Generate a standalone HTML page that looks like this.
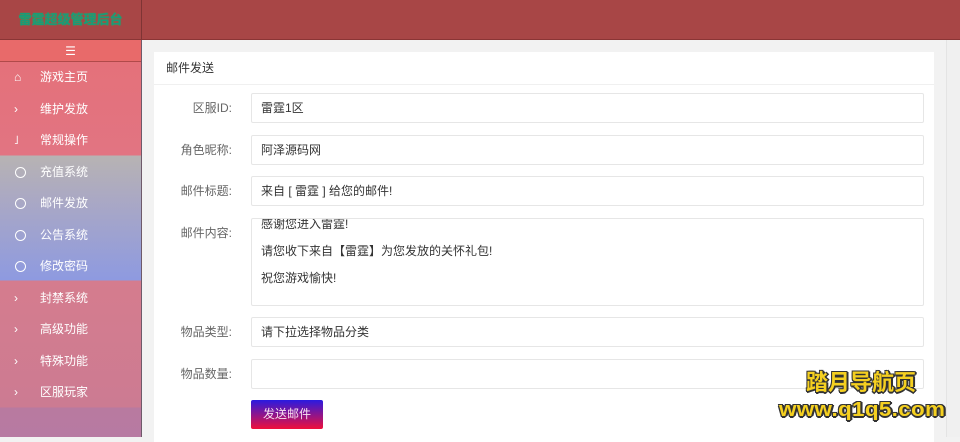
<!DOCTYPE html>
<html><head><meta charset="utf-8"><style>
*{margin:0;padding:0;box-sizing:border-box}
body{width:960px;height:437px;overflow:hidden;font-family:"Liberation Sans","Noto Sans CJK SC",sans-serif;font-size:12px;background:#f2f2f2;position:relative}
.hdr{position:absolute;left:0;top:0;width:960px;height:40px;background:#a84646;border-bottom:1px solid #8a3535}
.logo{position:absolute;left:0;top:0;width:142px;height:40px;border-right:1px solid #7e3434;color:#1a9a78;font-weight:bold;font-size:13px;line-height:40px;text-align:center;text-shadow:0 0 1px #0c6;}
.side{position:absolute;left:0;top:40px;width:142px;height:397px;border-right:1px solid #6e5a6a;
background:linear-gradient(#e86a6a 0,#e86a6a 21px,#e4717a 22px,#e27482 115px,#b7b3b3 116px,#aaa8c4 160px,#8e9ae0 240px,#d57c8e 241px,#cc7b92 367px,#b87aa0 368px,#b77aa2 397px)}
.tog{height:22px;border-bottom:1px solid #b04a4a;color:#fff;text-align:center;line-height:22px;font-size:12px}
.it{height:31.5px;line-height:31.5px;color:#fff;font-size:12px;position:relative;padding-left:40px}
.it i{position:absolute;left:14px;top:0;font-style:normal;font-size:12px}
.circ{position:absolute;left:15px;top:10px;width:11px;height:11px;border:1.5px solid #fff;border-radius:50%}
.card{position:absolute;left:154px;top:52px;width:780px;height:390px;background:#fff}
.ct{height:33px;border-bottom:1px solid #f0f0f0;line-height:33px;padding-left:12px;color:#333}
.lb{position:absolute;left:0;width:78px;text-align:right;color:#666}
.in{position:absolute;left:97px;width:673px;height:30px;border:1px solid #e6e6e6;border-radius:2px;padding-left:9px;line-height:28px;color:#333}
.btn{position:absolute;left:97px;top:348px;width:72px;height:29px;background:linear-gradient(#2a1ae0,#f0103a);color:#f8e0f0;text-align:center;line-height:29px;border-radius:2px}
.sb{position:absolute;left:946px;top:40px;width:14px;height:397px;background:#f0f0f0;border-left:1px solid #e4e4e4}
.wm{position:absolute;font-weight:bold;color:#f5d020;white-space:nowrap;text-shadow:-1px -1px 0 #333,1px -1px 0 #333,-1px 1px 0 #333,1px 1px 0 #333,0 2px 0 #333,2px 0 0 #333}
</style></head><body>
<div class="hdr"></div>
<div class="logo">雷霆超级管理后台</div>
<div class="side">
<div class="tog">☰</div>
<div class="it"><i>⌂</i>游戏主页</div>
<div class="it"><i>›</i>维护发放</div>
<div class="it"><i>˩</i>常规操作</div>
<div class="it"><span class="circ"></span>充值系统</div>
<div class="it"><span class="circ"></span>邮件发放</div>
<div class="it"><span class="circ"></span>公告系统</div>
<div class="it"><span class="circ"></span>修改密码</div>
<div class="it"><i>›</i>封禁系统</div>
<div class="it"><i>›</i>高级功能</div>
<div class="it"><i>›</i>特殊功能</div>
<div class="it"><i>›</i>区服玩家</div>
</div>
<div class="card">
<div class="lb" style="top:47px">区服ID:</div><div class="in" style="top:41px">雷霆1区</div>
<div class="ct">邮件发送</div>
<div class="lb" style="top:89px">角色昵称:</div><div class="in" style="top:83px">阿泽源码网</div>
<div class="lb" style="top:130px">邮件标题:</div><div class="in" style="top:124px">来自 [ 雷霆 ] 给您的邮件!</div>
<div class="lb" style="top:172px">邮件内容:</div><div class="in" style="top:166px;height:88px;line-height:27px;overflow:hidden"><div style="margin-top:-8px">感谢您进入雷霆!</div><div>请您收下来自【雷霆】为您发放的关怀礼包!</div><div>祝您游戏愉快!</div></div>
<div class="lb" style="top:271px">物品类型:</div><div class="in" style="top:265px">请下拉选择物品分类</div>
<div class="lb" style="top:313px">物品数量:</div><div class="in" style="top:307px"></div>
<div class="btn">发送邮件</div>
</div>
<div class="sb"></div>
<div class="wm" style="left:806px;top:365px;font-size:22px;letter-spacing:0px">踏月导航页</div>
<div class="wm" style="left:779px;top:399px;font-size:20px;letter-spacing:0.3px;transform:scaleX(1.12);transform-origin:left">www.q1q5.com</div>
</body></html>
